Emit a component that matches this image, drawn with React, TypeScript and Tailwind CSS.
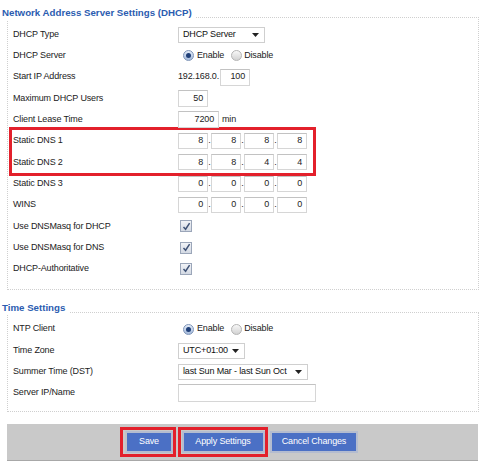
import React from "react";

function Radio({ checked }: { checked?: boolean }) {
  return checked ? (
    <span className="flex h-[11px] w-[11px] items-center justify-center rounded-full border border-[#7f95b8] bg-linear-to-b from-[#e4ecf8] to-[#a3b9db]">
      <span className="block h-[5px] w-[5px] rounded-full bg-[#1f3f78]" />
    </span>
  ) : (
    <span className="block h-[11px] w-[11px] rounded-full border border-[#b4b4b4] bg-linear-to-b from-[#f8f8f8] to-[#d2d2d2]" />
  );
}

function Check() {
  return (
    <span className="ml-[2px] flex h-[12px] w-[12px] items-center justify-center border border-[#9ba6b9] bg-linear-to-b from-[#f1f3f7] to-[#d3d9e3]">
      <svg width="9" height="9" viewBox="0 0 9 9">
        <path d="M1.5 5 L3.6 7.2 L7.6 1.2" fill="none" stroke="#3f5276" strokeWidth="1.5" />
      </svg>
    </span>
  );
}

function Box({ v, w = "w-[30px]", h = "h-[16px]" }: { v: string; w?: string; h?: string }) {
  return (
    <div className={`${w} ${h} flex items-center justify-end border border-[#d6d6d6] border-t-[#c2c2c2] bg-white pr-[4px] text-[#222]`}>
      {v}
    </div>
  );
}

function Sel({ text, w }: { text: string; w: string }) {
  return (
    <div className={`${w} flex h-[16px] items-center justify-between border border-[#cfcfcf] bg-white pl-[4px] pr-[5px] text-[#111]`}>
      <span>{text}</span>
      <svg width="7" height="4" viewBox="0 0 7 4">
        <polygon points="0,0 7,0 3.5,4" fill="#222" />
      </svg>
    </div>
  );
}

function Row({ label, children, inBox }: { label: string; children?: React.ReactNode; inBox?: boolean }) {
  return (
    <div
      className={
        inBox
          ? "grid h-[21.3px] grid-cols-[165px_1fr] items-center pl-[1px]"
          : "grid h-[21.3px] grid-cols-[165px_1fr] items-center pl-[5px]"
      }
    >
      <span className="text-[#222]">{label}</span>
      <div className="flex items-center">{children}</div>
    </div>
  );
}

function Ip({ parts }: { parts: string[] }) {
  return (
    <>
      {parts.map((p, i) => (
        <React.Fragment key={i}>
          <Box v={p} />
          {i < 3 && <span className="w-[3px] text-center text-[#222]">.</span>}
        </React.Fragment>
      ))}
    </>
  );
}

function RadioPair() {
  return (
    <div className="flex items-center">
      <span className="ml-[5px] block">
        <Radio checked />
      </span>
      <span className="ml-[3px] text-[#222]">Enable</span>
      <span className="ml-[7px] block">
        <Radio />
      </span>
      <span className="ml-[2px] text-[#222]">Disable</span>
    </div>
  );
}

export default function App() {
  return (
    <div className="h-[464px] w-[480px] overflow-hidden bg-white pt-[17px] font-['Liberation_Sans',Arial,sans-serif] text-[9px] tracking-[-0.15px]">
      <section className="ml-[7px] mr-[1px] border border-dotted border-[#cfcfcf] pb-[9px]">
        <h2 className="-ml-[6px] -mt-[12px] h-[14px] w-fit bg-white pr-[4px] text-[9.7px] font-bold leading-[14px] tracking-normal text-[#2b5cb0]">
          Network Address Server Settings (DHCP)
        </h2>
        <div className="mt-[4px]">
          <Row label="DHCP Type">
            <Sel text="DHCP Server" w="w-[87px]" />
          </Row>
          <Row label="DHCP Server">
            <RadioPair />
          </Row>
          <Row label="Start IP Address">
            <span className="text-[#222]">192.168.0.</span>
            <span className="ml-[1px]">
              <Box v="100" w="w-[30px]" h="h-[17px]" />
            </span>
          </Row>
          <Row label="Maximum DHCP Users">
            <Box v="50" w="w-[30px]" h="h-[17px]" />
          </Row>
          <Row label="Client Lease Time">
            <Box v="7200" w="w-[41px]" h="h-[17px]" />
            <span className="ml-[3px] text-[#222]">min</span>
          </Row>
          <div className="-my-[3px] ml-[1px] w-[307px] border-[3px] border-[#e3202b]">
            <Row label="Static DNS 1" inBox>
              <Ip parts={["8", "8", "8", "8"]} />
            </Row>
            <Row label="Static DNS 2" inBox>
              <Ip parts={["8", "8", "4", "4"]} />
            </Row>
          </div>
          <Row label="Static DNS 3">
            <Ip parts={["0", "0", "0", "0"]} />
          </Row>
          <Row label="WINS">
            <Ip parts={["0", "0", "0", "0"]} />
          </Row>
          <Row label="Use DNSMasq for DHCP">
            <Check />
          </Row>
          <Row label="Use DNSMasq for DNS">
            <Check />
          </Row>
          <Row label="DHCP-Authoritative">
            <Check />
          </Row>
        </div>
      </section>

      <section className="ml-[7px] mr-[1px] mt-[22px] border border-dotted border-[#cfcfcf] pb-[7px]">
        <h2 className="-ml-[6px] -mt-[12px] h-[14px] w-fit bg-white pr-[4px] text-[9.7px] font-bold leading-[14px] tracking-normal text-[#2b5cb0]">
          Time Settings
        </h2>
        <div className="mt-[4px]">
          <Row label="NTP Client">
            <RadioPair />
          </Row>
          <Row label="Time Zone">
            <Sel text="UTC+01:00" w="w-[67px]" />
          </Row>
          <Row label="Summer Time (DST)">
            <Sel text="last Sun Mar - last Sun Oct" w="w-[130px]" />
          </Row>
          <Row label="Server IP/Name">
            <div className="h-[18px] w-[138px] border border-[#d6d6d6] border-t-[#c2c2c2] bg-white" />
          </Row>
        </div>
      </section>

      <div className="ml-[7px] mr-[2px] mt-[12px] flex h-[37px] items-center justify-center gap-[2px] border-b border-[#a8a8a8] bg-[#c9c9c9] pr-[7px]">
        <div className="flex h-[30px] w-[56px] items-center justify-end border-[3px] border-[#e3202b]">
          <button className="h-[22px] w-[48px] border-2 border-[#b4bccf] border-l-[#c4c4c4] bg-[#4b70c5] text-white">
            Save
          </button>
        </div>
        <div className="flex h-[30px] w-[90px] items-center justify-center border-[3px] border-[#e3202b]">
          <button className="h-[22px] w-[83px] border-2 border-[#b4bccf] bg-[#4b70c5] text-white">
            Apply Settings
          </button>
        </div>
        <button className="h-[22px] w-[88px] border-2 border-[#b4bccf] bg-[#4b70c5] text-white">
          Cancel Changes
        </button>
      </div>
    </div>
  );
}
